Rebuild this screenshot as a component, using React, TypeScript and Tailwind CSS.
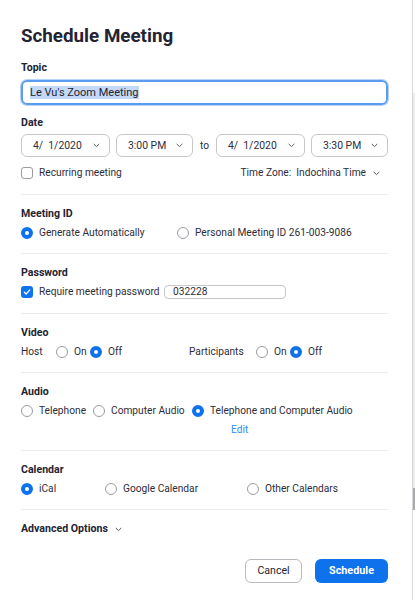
import React from "react";

const BLUE = "#0e72ed";

function Radio({ checked = false }: { checked?: boolean }) {
  return checked ? (
    <span className="inline-block w-[12px] h-[12px] rounded-full border-[4px] border-[#0e72ed] bg-white shrink-0" />
  ) : (
    <span className="inline-block w-[12px] h-[12px] rounded-full border border-[#9a9aa2] bg-white shrink-0" />
  );
}

function Checkbox({ checked = false }: { checked?: boolean }) {
  if (!checked)
    return <span className="inline-block w-[12px] h-[12px] rounded-[3px] border border-[#9a9aa2] bg-white shrink-0" />;
  return (
    <span className="inline-flex items-center justify-center w-[12px] h-[12px] rounded-[3px] bg-[#0e72ed] shrink-0">
      <svg width="8" height="8" viewBox="0 0 8 8" fill="none">
        <path d="M1.3 4.2 L3.2 6 L6.8 1.8" stroke="white" strokeWidth="1.2" strokeLinecap="round" strokeLinejoin="round" />
      </svg>
    </span>
  );
}

function Chevron({ className = "" }: { className?: string }) {
  return (
    <svg width="7" height="5" viewBox="0 0 7 5" className={className} fill="none">
      <path d="M1 1.2 L3.5 3.6 L6 1.2" stroke="#5a5a66" strokeWidth="1" strokeLinecap="round" strokeLinejoin="round" />
    </svg>
  );
}

function Select({ value, width }: { value: string; width: string }) {
  return (
    <div className={`${width} h-[23px] rounded-[6px] border border-[#c7c7cc] bg-white flex items-center justify-between pl-[11px] pr-[9px] text-[10.4px] text-[#2d2d3a]`}>
      <span className="whitespace-pre">{value}</span>
      <Chevron />
    </div>
  );
}

function Opt({ checked, label, width }: { checked?: boolean; label: string; width: string }) {
  return (
    <div className={`${width} flex items-center gap-[6px] shrink-0 whitespace-nowrap`}>
      <Radio checked={checked} />
      <span>{label}</span>
    </div>
  );
}

function Label({ children }: { children: React.ReactNode }) {
  return <div className="mt-[12px] h-[14px] leading-[14px] text-[10.6px] font-bold text-[#232333]">{children}</div>;
}

function Divider({ className = "mt-[13px]" }: { className?: string }) {
  return <div className={`${className} h-px bg-[#ececf0]`} />;
}

export default function App() {
  return (
    <div
      className="w-[415px] h-[600px] bg-white flex overflow-hidden"
      style={{ fontFamily: "Roboto, 'Liberation Sans', sans-serif" }}
    >
      <div className="flex-1 pl-[21px] pr-[24px] text-[10.2px] text-[#2d2d3a]">
        {/* header */}
        <h1 className="pt-[23px] text-[18.8px] leading-[26px] font-bold text-[#232333]">
          Schedule Meeting
        </h1>

        {/* topic */}
        <div className="mt-[12px] h-[14px] leading-[14px] text-[10.6px] font-bold text-[#232333]">Topic</div>
        <div className="mt-[5px] h-[25px] rounded-[6px] border-2 border-[#5c9cf0] shadow-[0_0_0_1px_#b8d3f8] flex items-center px-[7px]">
          <span className="bg-[#c3d9f7] text-[11px] leading-[13px] text-[#232333]">Le Vu's Zoom Meeting</span>
        </div>

        {/* date */}
        <div className="mt-[11px] h-[14px] leading-[14px] text-[10.6px] font-bold text-[#232333]">Date</div>
        <div className="mt-[4px] flex items-center">
          <Select value="4/  1/2020" width="w-[89px]" />
          <div className="w-[6px]" />
          <Select value="3:00 PM" width="w-[77px]" />
          <span className="w-[23px] text-center">to</span>
          <Select value="4/  1/2020" width="w-[89px]" />
          <div className="w-[6px]" />
          <Select value="3:30 PM" width="w-[77px]" />
        </div>
        <div className="mt-[9px] h-[14px] flex items-center justify-between">
          <div className="flex items-center gap-[6px]">
            <Checkbox />
            <span>Recurring meeting</span>
          </div>
          <div className="flex items-center pr-[8px]">
            <span>Time Zone:</span>
            <span className="ml-[5px]">Indochina Time</span>
            <Chevron className="ml-[7px]" />
          </div>
        </div>
        <Divider className="mt-[14px]" />

        {/* meeting id */}
        <Label>Meeting ID</Label>
        <div className="mt-[5px] h-[14px] flex items-center">
          <Opt checked label="Generate Automatically" width="w-[156px]" />
          <Opt label="Personal Meeting ID 261-003-9086" width="w-auto" />
        </div>
        <Divider />

        {/* password */}
        <Label>Password</Label>
        <div className="mt-[5px] h-[14px] flex items-center">
          <Checkbox checked />
          <span className="ml-[6px] w-[125px]">Require meeting password</span>
          <div className="w-[122px] h-[14px] rounded-[4px] border border-[#c7c7cc] px-[8px] flex items-center leading-none">
            032228
          </div>
        </div>
        <Divider className="mt-[14px]" />

        {/* video */}
        <Label>Video</Label>
        <div className="mt-[5px] h-[14px] flex items-center">
          <span className="w-[35px]">Host</span>
          <Opt label="On" width="w-[34px]" />
          <Opt checked label="Off" width="w-[99px]" />
          <span className="w-[67px]">Participants</span>
          <Opt label="On" width="w-[34px]" />
          <Opt checked label="Off" width="w-auto" />
        </div>
        <Divider />

        {/* audio */}
        <Label>Audio</Label>
        <div className="mt-[5px] h-[14px] flex items-center">
          <Opt label="Telephone" width="w-[72px]" />
          <Opt label="Computer Audio" width="w-[99px]" />
          <Opt checked label="Telephone and Computer Audio" width="w-auto" />
        </div>
        <div className="mt-[5px] h-[14px] leading-[14px] pl-[210px] text-[#2d8cff]">Edit</div>
        <Divider />

        {/* calendar */}
        <Label>Calendar</Label>
        <div className="mt-[5px] h-[14px] flex items-center">
          <Opt checked label="iCal" width="w-[84px]" />
          <Opt label="Google Calendar" width="w-[142px]" />
          <Opt label="Other Calendars" width="w-auto" />
        </div>
        <Divider />

        {/* advanced */}
        <div className="mt-[12px] h-[14px] flex items-center gap-[7px] text-[10.6px] font-bold text-[#232333]">
          <span>Advanced Options</span>
          <Chevron />
        </div>

        {/* buttons */}
        <div className="mt-[23px] flex justify-end gap-[13px]">
          <button className="w-[57px] h-[24px] rounded-[6px] border border-[#b9b9c0] bg-white text-[10.6px] text-[#232333]">
            Cancel
          </button>
          <button
            className="w-[73px] h-[24px] rounded-[6px] text-[10.8px] font-bold text-white"
            style={{ backgroundColor: BLUE }}
          >
            Schedule
          </button>
        </div>
      </div>

      {/* scrollbar edge */}
      <div className="w-[3px] h-full border-l border-[#d6d6d9] flex flex-col">
        <div className="h-[93px] bg-white" />
        <div className="h-[395px] bg-[#ededf0]" />
        <div className="h-[22px] bg-[#a9a9ae]" />
        <div className="flex-1 bg-white" />
      </div>
    </div>
  );
}
